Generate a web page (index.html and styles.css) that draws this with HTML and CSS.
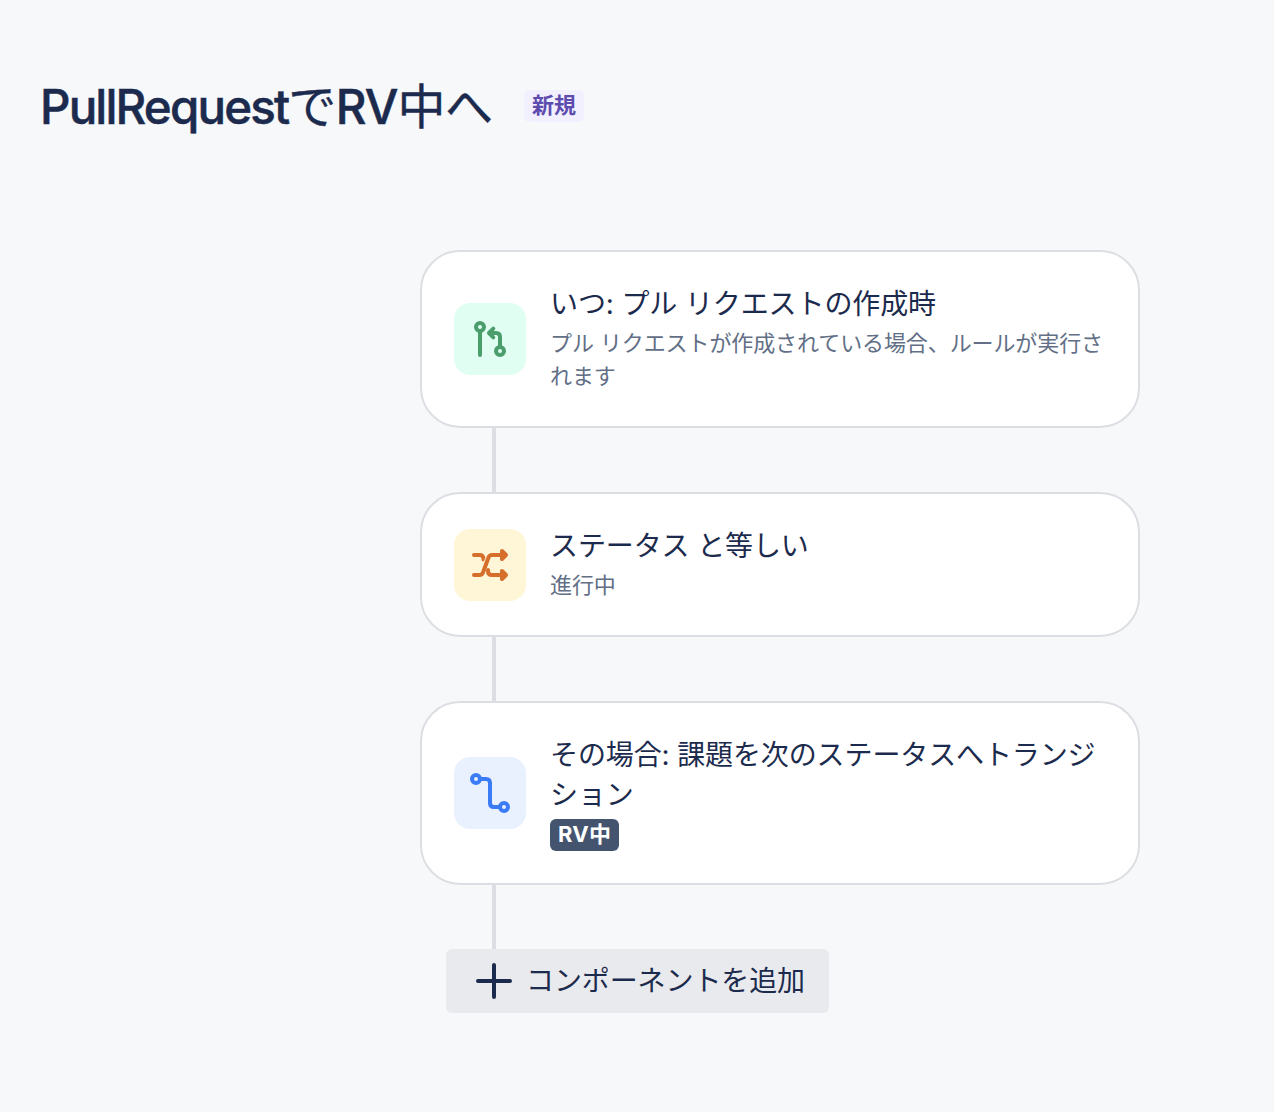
FILE: index.html
```html
<!DOCTYPE html>
<html lang="ja">
<head>
<meta charset="utf-8">
<title>PullRequestでRV中へ</title>
<link rel="stylesheet" href="styles.css">
</head>
<body>
<header class="rule-header">
  <h1 class="rule-title"><span class="latin">PullRequest</span>で<span class="latin rv">RV</span>中へ</h1>
  <span class="badge badge-new">新規</span>
</header>
<main class="rule-flow">
  <section class="card">
    <div class="tile tile-trigger">
      <svg width="72" height="72" viewBox="0 0 72 72" fill="none" stroke="currentColor" stroke-width="4" stroke-linecap="round" stroke-linejoin="round">
        <circle cx="26" cy="24" r="4"/><path d="M26 28v24"/>
        <circle cx="46" cy="48" r="4"/><path d="M46 44V34q0-4-4-4h-7M39.300 25.700L35 30l4.300 4.300"/>
      </svg>
    </div>
    <div class="card-body">
      <div class="card-title">いつ: プル リクエストの作成時</div>
      <div class="card-text">プル リクエストが作成されている場合、ルールが実行されます</div>
    </div>
  </section>
  <div class="connector"></div>
  <section class="card">
    <div class="tile tile-condition">
      <svg width="72" height="72" viewBox="0 0 72 72" fill="none" stroke="currentColor" stroke-width="4" stroke-linecap="round" stroke-linejoin="round">
        <path d="M20 26h6q2.500 0 3.500 3v1.500M34 41v1q0 4 4 4h13"/>
        <path class="gap" d="M28 43.500l6.500-15" stroke-width="5.500" stroke-linecap="butt"/>
        <path d="M20 46h5.500q2.500 0 3.500-2.500l5.500-15q1-2.500 3.500-2.500h13"/>
        <path d="M48 22l4 4-4 4zM48 42l4 4-4 4z" fill="currentColor"/>
      </svg>
    </div>
    <div class="card-body">
      <div class="card-title">ステータス と等しい</div>
      <div class="card-text">進行中</div>
    </div>
  </section>
  <div class="connector"></div>
  <section class="card">
    <div class="tile tile-action">
      <svg width="72" height="72" viewBox="0 0 72 72" fill="none" stroke="currentColor" stroke-width="4" stroke-linecap="round" stroke-linejoin="round">
        <circle cx="22" cy="22" r="4"/><circle cx="50" cy="50" r="4"/>
        <path d="M26 22h6q4 0 4 4v20q0 4 4 4h6"/>
      </svg>
    </div>
    <div class="card-body">
      <div class="card-title">その場合: 課題を次のステータスへトランジション</div>
      <span class="badge badge-status">RV中</span>
    </div>
  </section>
  <div class="connector"></div>
  <button class="add-button" type="button">
    <svg width="36" height="36" viewBox="0 0 36 36" fill="none" stroke="currentColor" stroke-width="4" stroke-linecap="round"><path d="M2 18h32M18 2v32"/></svg>
    <span>コンポーネントを追加</span>
  </button>
</main>
</body>
</html>
```

FILE: styles.css
```css
* { box-sizing: border-box; }

body {
  margin: 0;
  min-height: 1112px;
  background: #f7f8fa;
  color: #1c2b4d;
  font-family: Inter, "Noto Sans CJK JP", sans-serif;
}

.rule-header {
  display: flex;
  align-items: center;
  height: 56px;
  margin: 78px 0 116px 40px;
}

.rule-title {
  width: 484px;
  margin: 0;
  padding-top: 2px;
  font-size: 48px;
  font-weight: 400;
  line-height: 56px;
  letter-spacing: -0.5px;
  white-space: nowrap;
  -webkit-text-stroke: 0.4px currentColor;
}

.latin {
  font-size: 47.5px;
  font-weight: 500;
  letter-spacing: -1.85px;
  -webkit-text-stroke: 0.5px currentColor;
}

.latin.rv { letter-spacing: -1px; }

.badge {
  display: flex;
  align-items: center;
  width: fit-content;
  height: 32px;
  padding: 0 8px 2px;
  border-radius: 6px;
  font-size: 22px;
  font-weight: 700;
  line-height: 30px;
}

.badge-new { background: #f2efff; color: #5d4bae; }

.badge-status {
  margin-top: 4px;
  background: #44546f;
  color: #fff;
  letter-spacing: 0.3px;
}

.rule-flow {
  width: 720px;
  margin-left: 420px;
}

.card {
  display: flex;
  align-items: center;
  gap: 24px;
  padding: 32px;
  border: 2px solid #dddee3;
  border-radius: 40px;
  background: #fff;
}

.tile {
  flex: none;
  width: 72px;
  height: 72px;
  border-radius: 16px;
}

.tile svg { display: block; }
.tile-trigger { background: #e0fef2; color: #4b9e6c; }
.tile-condition { background: #fff6d8; color: #d66f2b; }
.tile-condition .gap { stroke: #fff6d8; }
.tile-action { background: #eaf1fe; color: #3b7bf6; }

.card-body { flex: 1; min-width: 0; }

.card-title {
  font-size: 28px;
  line-height: 40px;
  letter-spacing: -0.12px;
}

.card-text {
  margin-top: 3px;
  padding-bottom: 1px;
  color: #626f86;
  font-size: 22px;
  line-height: 33px;
  letter-spacing: -0.1px;
}

.connector {
  width: 4px;
  height: 64px;
  margin-left: 72px;
  background: #dddee3;
}

.add-button {
  display: flex;
  align-items: center;
  gap: 14px;
  width: 383px;
  height: 64px;
  margin-left: 26px;
  padding: 0 0 0 30px;
  border: 0;
  border-radius: 6px;
  background: #e9eaee;
  color: inherit;
  font: 400 28px/40px Inter, "Noto Sans CJK JP", sans-serif;
  letter-spacing: -0.1px;
  white-space: nowrap;
}
```
